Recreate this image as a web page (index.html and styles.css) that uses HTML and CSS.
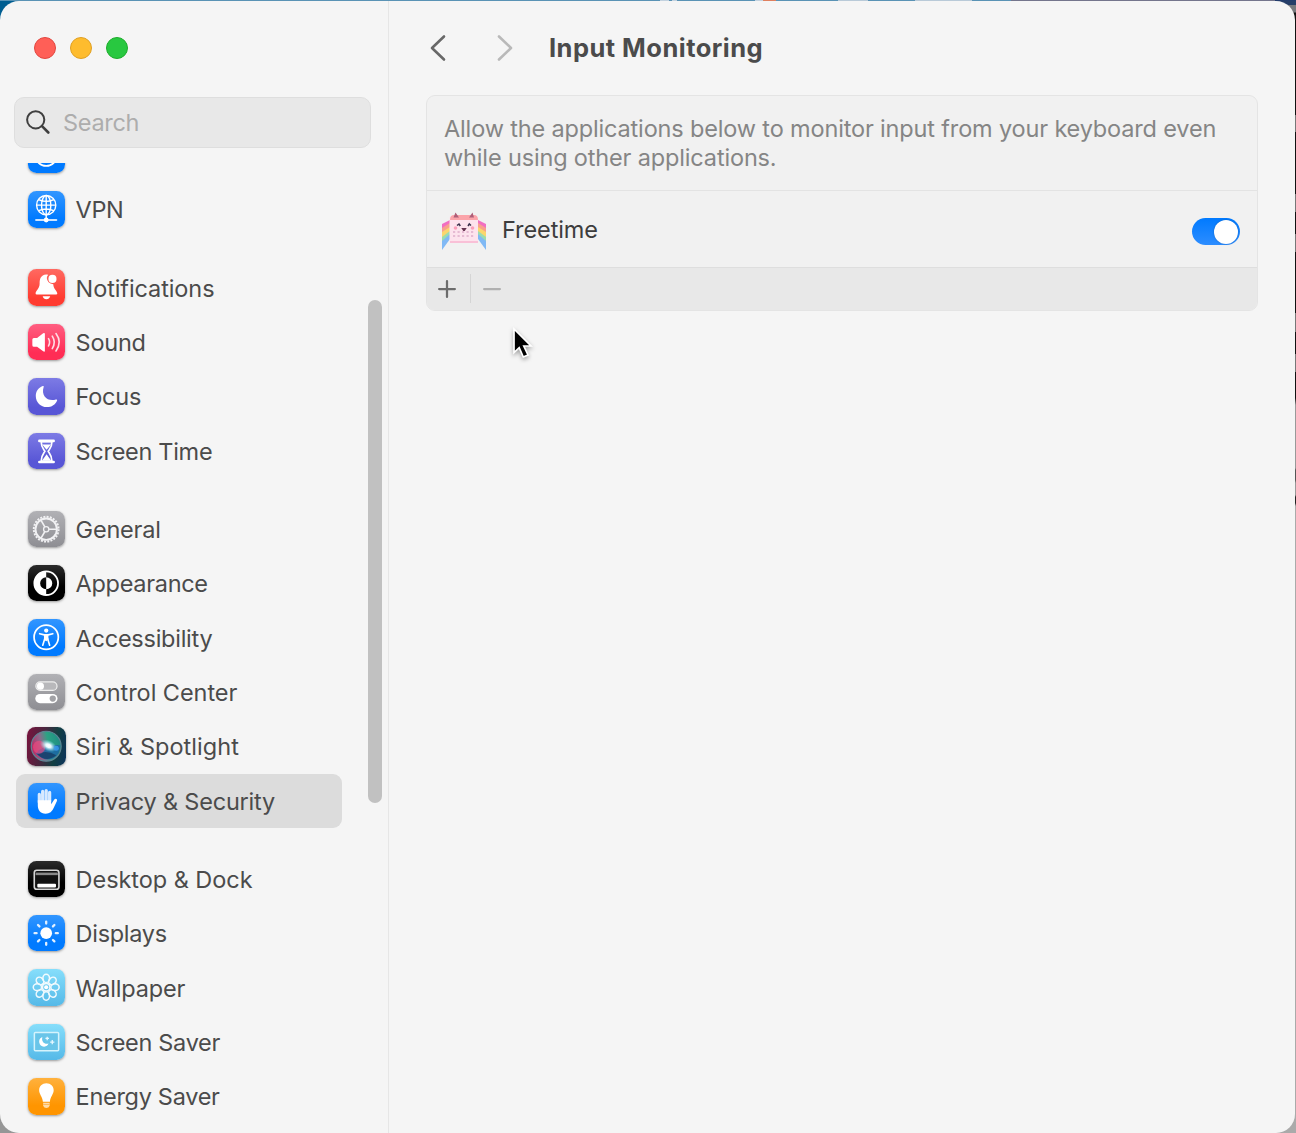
FILE: index.html
```html
<!DOCTYPE html>
<html lang="en">
<head>
<meta charset="utf-8">
<title>Input Monitoring</title>
<link rel="stylesheet" href="styles.css">
</head>
<body>
<svg class="defs" width="0" height="0" aria-hidden="true">
  <defs>
    <symbol id="globe" viewBox="0 0 36 36">
      <g fill="none" stroke="#fff" stroke-width="1.4"><circle cx="18" cy="14" r="9.5"/><ellipse cx="18" cy="14" rx="4.6" ry="9.5"/><path d="M18 4.500V28M8.500 14H27.500M10.500 8.500Q18 12 25.500 8.500M10.500 19.500Q18 16 25.500 19.500"/></g>
      <path d="M8 28.700H28" stroke="#fff" stroke-width="2" stroke-linecap="round" opacity=".8"/><circle cx="18" cy="28.700" r="2.400" fill="#fff"/>
    </symbol>
  </defs>
</svg>
<div class="window">
  <aside class="sidebar">
    <div class="lights"><i class="light close"></i><i class="light minimize"></i><i class="light expand"></i></div>
    <div class="search">
      <svg class="magnifier" viewBox="0 0 24 24"><circle cx="9.700" cy="9.800" r="8.600" fill="none" stroke="#3f3f3f" stroke-width="2"/><path d="M16 16.200L22.300 22.500" stroke="#3f3f3f" stroke-width="2.600" stroke-linecap="round"/></svg>
      <span>Search</span>
    </div>
    <nav class="list">
      <div class="group first">
        <div class="row"><span class="icon blue"><svg viewBox="0 0 36 36"><circle cx="18" cy="18" r="10.600" fill="none" stroke="#fff" stroke-width="1.700"/><path d="M10 25Q18 19 26 25" fill="none" stroke="#fff"/></svg></span></div>
        <div class="row"><span class="icon blue"><svg><use href="#globe"/></svg></span><span class="label vpn">VPN</span></div>
      </div>
      <div class="group">
        <div class="row"><span class="icon red"><svg viewBox="0 0 36 36"><path fill="#fff" d="M18 5.500C12.500 6 11.500 10 11.500 14.500C11.500 19.500 7.500 21.500 7.500 24.300Q7.500 25.300 8.700 25.300H27.800Q29 25.300 29 24.300C29 21.500 25.200 20 25 15Q19 14.500 18.600 9Q18.700 7 20 5.700Q19 5.400 18 5.500ZM14.500 27H22Q21 30 18.200 30T14.500 27Z"/><circle cx="24.200" cy="9.800" r="4" fill="#fff"/></svg></span><span class="label notifications">Notifications</span></div>
        <div class="row"><span class="icon pink"><svg viewBox="0 0 36 36"><path fill="#fff" d="M5.800 13.800H9L15 9.200Q16.700 8.300 16.700 10V26.500Q16.700 28 15 27L9 22.500H5.800Q4.300 22.500 4.300 21V15.300Q4.300 13.800 5.800 13.800Z"/><path d="M20.300 14.500Q22.500 18 20.300 21.700M24 12Q28 18 24 24.300M27.700 9.500Q34 18 27.700 26.700" fill="none" stroke="#ffdce4" stroke-width="1.600" stroke-linecap="round"/></svg></span><span class="label sound">Sound</span></div>
        <div class="row"><span class="icon purple"><svg viewBox="0 0 36 36"><path fill="#fff" d="M14.600 7.900C10 9.500 7.700 13.500 7.700 17.700C7.700 24 12.600 28.800 18.600 28.800C23.400 28.800 27.200 26.200 28.800 22.200C29 21.500 28.400 21 27.600 21.300C20 23.800 12.500 18 15.500 8.900C15.800 8.100 15.300 7.600 14.600 7.900Z"/></svg></span><span class="label focus">Focus</span></div>
        <div class="row"><span class="icon purple"><svg viewBox="0 0 36 36"><path d="M13 8.500C13 14 15 15.500 16.700 18C15 20.500 13 22.500 13 28H23.700C23.700 22.500 21.700 20.500 20 18C21.700 15.500 23.700 14 23.700 8.500Z" fill="none" stroke="#fff" stroke-width="1.700"/><path d="M11.200 7.800H25.400M11.200 28.600H25.400" stroke="#fff" stroke-width="2.500" stroke-linecap="round"/><path d="M14 11.500H22.700L18.400 16.500ZM18.400 21L23 27.500H13.800Z" fill="#fff"/></svg></span><span class="label screentime">Screen Time</span></div>
      </div>
      <div class="group">
        <div class="row"><span class="icon gray"><svg viewBox="0 0 36 36"><g fill="none" stroke="#f1f1f3"><circle cx="18" cy="18" r="12.300" stroke-width="1.900" stroke-dasharray="2 1.220"/><circle cx="18" cy="18" r="10.600" stroke-width="1.900"/><circle cx="18" cy="18" r="2.600" stroke-width="1.300"/><path d="M20.500 18H28.200M16.700 15.700L12.900 9.200M16.700 20.300L12.900 26.800" stroke-width="1.600"/></g></svg></span><span class="label general">General</span></div>
        <div class="row"><span class="icon black"><svg viewBox="0 0 36 36"><circle cx="18" cy="18" r="11.700" fill="none" stroke="#fff" stroke-width="1.800"/><path fill="#fff" d="M18 6V12A6 6 0 0 0 18 24V30A12 12 0 0 1 18 6ZM18 12A6 6 0 0 1 18 24Z"/></svg></span><span class="label appearance">Appearance</span></div>
        <div class="row"><span class="icon blue"><svg viewBox="0 0 36 36"><circle cx="18" cy="18" r="12" fill="none" stroke="#fff" stroke-width="1.700"/><circle cx="18" cy="11.500" r="2.100" fill="#fff"/><path d="M11.500 14.500L16 15.700H20L24.500 14.500M16.700 19L14.600 26M19.300 19L21.400 26" fill="none" stroke="#fff" stroke-width="1.600" stroke-linecap="round"/><path d="M15.800 15H20.200V20.500L18 22L15.800 20.500Z" fill="#fff"/></svg></span><span class="label accessibility">Accessibility</span></div>
        <div class="row"><span class="icon gray"><svg viewBox="0 0 36 36"><rect x="7.800" y="7.800" width="20.900" height="8.400" rx="4.200" fill="#b8b8bb" stroke="#eee" stroke-width="1.200"/><circle cx="12.300" cy="12" r="3.500" fill="#fff"/><rect x="7.200" y="19.700" width="22" height="9.200" rx="4.600" fill="#fff"/><circle cx="24.500" cy="24.300" r="3.100" fill="#a2a2a6"/></svg></span><span class="label control">Control Center</span></div>
        <div class="row"><span class="icon siri"><svg viewBox="0 0 38 38"><defs><radialGradient id="core"><stop stop-color="#fff"/><stop offset=".3" stop-color="#e9faff"/><stop offset="1" stop-color="#7bdcee" stop-opacity="0"/></radialGradient><linearGradient id="orb" x1="0" y1=".6" x2="1" y2=".4"><stop stop-color="#c02562"/><stop offset=".35" stop-color="#8d6a8c"/><stop offset=".6" stop-color="#2ba383"/><stop offset="1" stop-color="#1f8c84"/></linearGradient></defs><circle cx="19" cy="19" r="14.800" fill="url(#orb)" stroke="#5d8494" stroke-width="1.200"/><path d="M9 26Q16 17 33 18Q33 27 26 31Q17 35 9 26Z" fill="#1c62a6" opacity=".8"/><path d="M10 27Q19 22 29 28Q19 36 10 27Z" fill="#14345b" opacity=".7"/><ellipse cx="12" cy="20" rx="6" ry="6.500" fill="#f04a80" opacity=".65"/><ellipse cx="21" cy="18.500" rx="9" ry="5.500" transform="rotate(25 21 19)" fill="url(#core)"/><circle cx="29" cy="21" r="2.500" fill="#399bf2" opacity=".8"/></svg></span><span class="label sirilabel">Siri &amp; Spotlight</span></div>
        <div class="row selected"><span class="icon blue"><svg viewBox="0 0 36 36"><g stroke-linecap="round" fill="none"><path d="M11.200 19V11.300M14.500 18V8.300M18 18V7.500M21.400 18V9.300" stroke="#d8eaff" stroke-width="3.200"/></g><path fill="#fff" d="M9.700 17H22.900V21L25.500 17Q27 15 28.500 16Q29 16.500 28.500 18L25.500 24.500Q23.200 30.300 17.500 30.300C12 30.300 9.700 26.500 9.700 22Z"/></svg></span><span class="label privacy">Privacy &amp; Security</span></div>
      </div>
      <div class="group">
        <div class="row"><span class="icon black"><svg viewBox="0 0 36 36"><rect x="6.200" y="9.200" width="24.400" height="18.800" rx="2.500" fill="#111" stroke="#d5d5d5" stroke-width="1.600"/><path d="M7.500 11.500H29.500V14H7.500Z" fill="#888"/><rect x="9.200" y="22.500" width="18.500" height="3.800" rx="1" fill="#fff"/></svg></span><span class="label desktoplabel">Desktop &amp; Dock</span></div>
        <div class="row"><span class="icon blue"><svg viewBox="0 0 36 36"><circle cx="18" cy="18" r="5.800" fill="#fff"/><path d="M18 6.500V8.500M18 27.500V29.500M6.500 18H8.500M27.500 18H29.500M9.900 9.900L11.300 11.300M24.700 24.700L26.100 26.100M9.900 26.100L11.300 24.700M24.700 11.300L26.100 9.900" stroke="#e2f0ff" stroke-width="2.300" stroke-linecap="round"/></svg></span><span class="label displays">Displays</span></div>
        <div class="row"><span class="icon cyan"><svg viewBox="0 0 36 36"><g fill="none" stroke="#fff" stroke-width="1.500" opacity=".9"><g id="petals"><ellipse cx="18" cy="9.300" rx="3.300" ry="4.100"/><ellipse cx="18" cy="26.700" rx="3.300" ry="4.100"/><ellipse cx="9.300" cy="18" rx="4.100" ry="3.300"/><ellipse cx="26.700" cy="18" rx="4.100" ry="3.300"/></g><use href="#petals" transform="rotate(45 18 18)"/><circle cx="18" cy="18" r="3.700"/></g><circle cx="18" cy="18" r="2" fill="#fff"/></svg></span><span class="label wallpaper">Wallpaper</span></div>
        <div class="row"><span class="icon cyan"><svg viewBox="0 0 36 36"><rect x="6.300" y="8.300" width="24" height="18.200" rx="1" fill="#69c5e9" stroke="#d5f3fc" stroke-width="1.500"/><path d="M14.200 12.800C8.800 14.700 11 22.600 16 22.400C18.300 22.300 19.600 21.200 20.300 19.300C16 20.300 13 17.200 14.200 12.800Z" fill="#fff"/><path d="M19 12.500V16M17.250 14.250H20.750M24 15.800V20M21.900 17.900H26.100" stroke="#e6f8ff" stroke-width="1.300"/></svg></span><span class="label saver">Screen Saver</span></div>
        <div class="row"><span class="icon orange"><svg viewBox="0 0 36 36"><path fill="#fff" d="M18.200 5.200C14 5.200 11 8.200 11 12C11 16 14.500 18.500 14.700 23.500H21.700C21.900 18.500 25.400 16 25.400 12C25.400 8.200 22.400 5.200 18.200 5.200Z"/><path d="M15 24.600H21.400V27.500Q20.500 29.700 18.200 29.700T15 27.500Z" fill="#ffdca8"/><path d="M15 26.200H21.400" stroke="#ffad37" stroke-width=".7"/></svg></span><span class="label energy">Energy Saver</span></div>
      </div>
    </nav>
    <div class="scrollbar"></div>
  </aside>
  <main class="content">
    <header class="toolbar">
      <svg class="chevron" viewBox="0 0 16 28"><path d="M14 2.500L2 14L14 25.500" fill="none" stroke="#686868" stroke-width="2.600" stroke-linecap="round" stroke-linejoin="round"/></svg>
      <svg class="chevron next" viewBox="0 0 16 28"><path d="M2 2.500L14 14L2 25.500" fill="none" stroke="#b9b9b9" stroke-width="2.600" stroke-linecap="round" stroke-linejoin="round"/></svg>
      <h1>Input Monitoring</h1>
    </header>
    <section class="card">
      <p class="note"><span class="line">Allow the applications below to monitor input from your keyboard even</span><span class="line">while using other applications.</span></p>
      <div class="app">
        <svg class="appicon" viewBox="0 0 44 40">
          <g id="wing"><path d="M0 12L8 8V12L0 17Z" fill="#f16fc2"/><path d="M0 16L8 11V16L0 21Z" fill="#f9a08c"/><path d="M0 20L8 15V20L0 26Z" fill="#fbd66d"/><path d="M0 25L8 19V23L0 31Z" fill="#9bdcb0"/><path d="M0 29L8 22V27L0 38Z" fill="#80b9f5"/></g>
          <use href="#wing" transform="matrix(-1 0 0 1 44 0)"/>
          <rect x="7.500" y="4" width="28.500" height="27" rx="2" fill="#fde3ed"/><path d="M8 8Q8 3 12 3H32Q36 3 36 8Z" fill="#fba4aa"/><path d="M11.500 5.500L13.500 .5L17 5.500ZM27 5.500L30.500 .5L32 5.500Z" fill="#ae5f78"/>
          <path d="M8 30H36" stroke="#f9c0d7" stroke-width="2"/>
          <g stroke="#e6bbd3" stroke-width="1.800" stroke-dasharray="2.200 2.300"><path d="M11 20H33M11 24H33"/></g>
          <path d="M15 13.500L17 12L18.300 14M26 14L27.300 12L29 13.500" fill="none" stroke="#3b314c" stroke-width="1.500"/><path d="M19.300 16H24.700L22.700 19H21.300Z" fill="#65334f"/><circle cx="13.500" cy="16" r="1.800" fill="#fb9fba"/><circle cx="30.500" cy="16" r="1.800" fill="#fb9fba"/>
        </svg>
        <span class="appname">Freetime</span>
        <span class="toggle"><i></i></span>
      </div>
      <footer class="actions">
        <svg class="plus" viewBox="0 0 16 16"><path d="M8 1V15M1 8H15" stroke="#6c6c6c" stroke-width="2" stroke-linecap="round"/></svg>
        <i class="separator"></i>
        <svg class="minus" viewBox="0 0 16 16"><path d="M1 8H15" stroke="#b0b0b0" stroke-width="2" stroke-linecap="round"/></svg>
      </footer>
    </section>
  </main>
</div>
<svg class="cursor" viewBox="0 0 24 36"><path d="M3 3V26.500L8.200 21.700L12.300 31L17 29L12.800 20H20Z" fill="#000" stroke="#fff" stroke-width="1.700"/></svg>
</body>
</html>
```
FILE: styles.css
```css
* { box-sizing: border-box; }
body {
  margin: 0; width: 1296px; height: 1133px; overflow: hidden; padding-top: 1px;
  font-family: Inter, "Liberation Sans", sans-serif; color: #4b4b4b;
  background:
    linear-gradient(90deg, transparent 660px, #c3d2df 660px 669px, transparent 669px 672px, #c3d2df 672px 677px, transparent 677px 755px, #c3d2df 755px 763px, #df805f 763px 776px, transparent 776px 838px, #b9cad8 838px 868px, transparent 868px 915px, #b9cad8 915px 972px, transparent 972px) 0 0 / 100% 1px no-repeat,
    linear-gradient(90deg, #5a93b5 20px, #5a93b5 1011px, #74758c 1011px 1275px, #223c6c 1275px) 0 0 / 100% 1px no-repeat,
    linear-gradient(#005e91, #005e91) 0 0 / 30px 30px no-repeat,
    linear-gradient(#263e68 5px, #77797d 5px 12px, #111 13px 115px, #777 115px 132px, #111 132px 194px, #777 194px 212px, #111 212px 234px, #777 234px 252px, #111 252px 313px, #777 313px 332px, #111 332px 354px, #777 354px 372px, #111 372px 398px, #999 405px 468px, #555 470px 480px, #999 483px 495px, #222 497px 503px, #aaa 506px) 100% 0 / 30px 100% no-repeat,
    #969696;
}
.defs { position: absolute; }
.window { width: 1294.500px; height: 1132px; display: flex; border-radius: 19px; overflow: hidden; background: #f5f5f5; }
.sidebar { position: relative; width: 389px; border-right: 1.500px solid #e6e6e6; display: flex; flex-direction: column; }
.lights { display: flex; gap: 14px; padding: 35.500px 0 0 33.500px; height: 96px; }
.light { width: 22.300px; height: 22.300px; border-radius: 50%; border: 1px solid #e2463f; background: #ff5f57; }
.light.minimize { border-color: #e0a023; background: #febc2e; }
.light.expand { border-color: #1dad2b; background: #28c840; }
.search { width: 357px; height: 50.500px; margin-left: 14px; padding-left: 11px; display: flex; align-items: center; gap: 13px; border: 1px solid #dedede; border-radius: 10px; background: #e8e8e8; color: #adadad; font-size: 23.500px; letter-spacing: -.3px; }
.magnifier { width: 24px; height: 24px; }
.list { flex: none; height: 969px; margin-top: 15.500px; overflow: hidden; padding-left: 16px; }
.group { margin-bottom: 23.700px; }
.group.first { margin-top: -35.100px; }
.row { width: 326px; height: 54.400px; border-radius: 9px; padding-left: 12.400px; display: flex; align-items: center; gap: 10.800px; }
.selected { background: #dcdcdc; }
.icon { flex: none; width: 36.400px; height: 36.400px; border-radius: 8.500px; box-shadow: 0 1px 2.500px rgba(0,0,0,.38); }
.icon svg { display: block; width: 100%; height: 100%; }
.blue { background: linear-gradient(#3296ff, #007aff 75%); }
.red { background: linear-gradient(#ff6961, #ff3b30 80%); }
.pink { background: linear-gradient(#ff5e81, #ff2d55 80%); }
.purple { background: linear-gradient(#7d7be5, #5856d6 80%); }
.gray { background: linear-gradient(#b1b1b5, #8e8e93); }
.black { background: linear-gradient(#2b2b2b, #000 60%); }
.cyan { background: linear-gradient(#86defb, #55b9e8); }
.orange { background: linear-gradient(#ffb13d, #ff9500 75%); }
.siri { width: 38.400px; height: 38.400px; margin: 0 -1px; background: linear-gradient(100deg, #7a133d, #4b263f 40%, #123f42 70%, #0c335d); }
.label { font-size: 23.500px; white-space: nowrap; line-height: 30px; margin-top: 2px; letter-spacing: -.3px; }
.vpn { letter-spacing: -.4px; }
.notifications { letter-spacing: -.1px; }
.sound, .focus, .accessibility { letter-spacing: -.25px; }
.general, .privacy, .wallpaper { letter-spacing: -.2px; }
.control, .desktoplabel { letter-spacing: -.05px; }
.sirilabel { letter-spacing: .04px; }
.scrollbar { position: absolute; left: 367.500px; top: 298.500px; width: 14.500px; height: 503px; border-radius: 8px; background: #c1c1c1; }
.content { flex: 1; padding-left: 37px; }
.toolbar { height: 94px; display: flex; align-items: center; padding-left: 4px; }
.chevron { width: 16px; height: 28px; }
.chevron.next { margin-left: 51px; }
h1 { margin: -1px 0 0 36px; font-size: 25.500px; font-weight: 700; line-height: 30px; letter-spacing: .46px; }
.card { width: 832px; height: 215.500px; border: 1px solid #e4e4e4; border-radius: 9px; overflow: hidden; background: #f1f1f1; }
.note { height: 95px; margin: 0; padding: 18px 0 0 17px; border-bottom: 1px solid #e3e3e3; color: #858585; font-size: 23.500px; line-height: 29.300px; letter-spacing: -.155px; }
.line { display: block; white-space: nowrap; }
.app { height: 76px; display: flex; align-items: center; padding: 5px 17px 0 15px; }
.appicon { width: 44px; height: 40px; }
.appname { margin: -4px 0 0 16px; font-size: 23.500px; color: #3d3d3d; letter-spacing: -.1px; }
.toggle { margin-left: auto; width: 48px; height: 27.500px; padding: 1.800px; border-radius: 14px; display: flex; justify-content: flex-end; background: linear-gradient(#007aff, #2d8dff); }
.toggle i { width: 24px; height: 24px; border-radius: 50%; background: #fff; box-shadow: 0 0 2px rgba(0,0,0,.25); }
.actions { height: 43px; display: flex; align-items: center; padding: 0 0 1px 11px; border-top: 1px solid #dedede; background: #e8e8e8; }
.plus, .minus { width: 18px; height: 18px; }
.separator { width: 1px; height: 29px; margin: 0 12px 0 14px; background: #d5d5d5; }
.cursor { position: absolute; left: 511px; top: 326px; width: 24px; height: 36px; filter: drop-shadow(0 2px 2px rgba(0,0,0,.35)); }
```
